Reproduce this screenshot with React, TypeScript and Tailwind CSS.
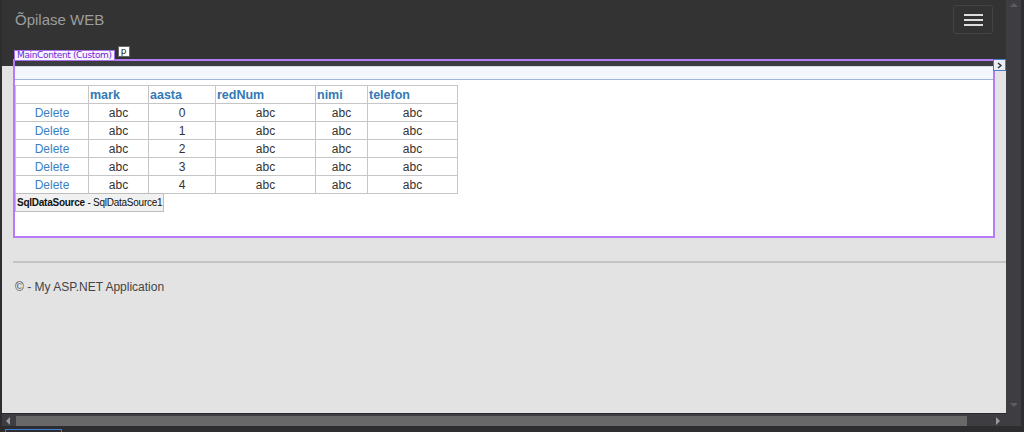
const rows = [0, 1, 2, 3, 4];
const cols = ["mark", "aasta", "redNum", "nimi", "telefon"];
const widths = ["w-[73px]", "w-[60px]", "w-[67px]", "w-[100px]", "w-[52px]", "w-[90px]"];

function GridView() {
  return (
    <table className="mt-[5px] w-[443px] table-fixed border-collapse border border-[#c6c6c6] font-['Liberation_Sans',Arial,sans-serif] text-[12px] leading-[14px] text-[#333]">
      <colgroup>
        {widths.map((w) => (
          <col key={w} className={w} />
        ))}
      </colgroup>
      <thead>
        <tr className="h-[18px]">
          <th className="border border-[#c6c6c6] p-0"></th>
          {cols.map((c) => (
            <th key={c} className="border border-[#c6c6c6] p-0 pl-[1px] text-left text-[12.5px] font-bold text-[#337ab7]">
              {c}
            </th>
          ))}
        </tr>
      </thead>
      <tbody>
        {rows.map((n) => (
          <tr key={n} className="h-[18px] text-center">
            <td className="border border-[#c6c6c6] p-0 text-[#3a80c4]">Delete</td>
            <td className="border border-[#c6c6c6] p-0">abc</td>
            <td className="border border-[#c6c6c6] p-0">{n}</td>
            <td className="border border-[#c6c6c6] p-0">abc</td>
            <td className="border border-[#c6c6c6] p-0">abc</td>
            <td className="border border-[#c6c6c6] p-0">abc</td>
          </tr>
        ))}
      </tbody>
    </table>
  );
}

export default function App() {
  return (
    <div className="flex h-[432px] w-[1024px] flex-col overflow-hidden bg-[#2d2d30]">
      <div className="flex h-[413px] pl-[2px]">
        {/* design surface */}
        <div className="flex w-[1004px] flex-col bg-[#e3e3e3]">
          <header className="flex h-[66px] flex-col bg-[#333333]">
            <div className="flex h-[46px] items-start justify-between px-[13px]">
              <span className="pt-[10px] font-['Liberation_Sans',Arial,sans-serif] text-[15px] leading-[20px] text-[#9d9d9d]">
                Õpilase WEB
              </span>
              <button className="mt-[5px] flex h-[29px] w-[40px] flex-col items-center justify-center gap-[3px] rounded-[3px] border border-[#444]">
                <span className="h-[2px] w-[19px] bg-[#dddddd]" />
                <span className="h-[2px] w-[19px] bg-[#dddddd]" />
                <span className="h-[2px] w-[19px] bg-[#dddddd]" />
              </button>
            </div>
            <div className="relative z-10 flex items-start pl-[12px]">
              <span className="mt-[4px] h-[11px] border border-[#a66ee8] bg-[#f8f4ff] px-[2px] font-['DejaVu_Sans',Verdana,sans-serif] text-[9px] leading-[9px] tracking-[-0.35px] text-[#6d28d9]">
                MainContent (Custom)
              </span>
              <span className="ml-[3px] flex h-[11px] w-[12px] items-center justify-center border border-[#666] bg-white font-['DejaVu_Sans',sans-serif] text-[9px] leading-none text-[#222]">
                p
              </span>
            </div>
          </header>

          <div className="relative mx-[11px] -mt-[7px] flex h-[179px] flex-col border-2 border-[#b57cf5] bg-white">
            <div className="h-[5px] bg-[#3b3c41]" />
            <div className="h-[14px] border-t border-b border-t-[#d3dae4] border-b-[#9fb5db] border-b-dotted bg-[#f3f7fd]" />
            <GridView />
            <div className="-mt-px w-[149px] whitespace-nowrap border border-[#bdbdbd] bg-[#f1f1f1] pl-[1px] font-['Liberation_Sans',Arial,sans-serif] text-[10px] leading-[17px] tracking-[-0.25px] text-[#111]">
              <b>SqlDataSource</b> - SqlDataSource1
            </div>
            <span className="absolute -right-[13px] -top-[2px] flex h-[12px] w-[13px] items-center justify-center border border-[#4a7cc7] bg-[#e9eef6]">
              <svg width="7" height="7" viewBox="0 0 7 7" fill="none">
                <path d="M2 1l3 2.5L2 6" stroke="#333" strokeWidth="1.4" />
              </svg>
            </span>
          </div>

          <div className="ml-[11px] mt-[23px] h-[2px] bg-[#c4c4c4]" />
          <p className="ml-[13px] mt-[16px] font-['Liberation_Sans',Arial,sans-serif] text-[12px] leading-[16px] text-[#444]">
            © - My ASP.NET Application
          </p>
        </div>

        {/* vertical scrollbar */}
        <div className="flex w-[15px] flex-col items-center justify-between bg-[#3e3e42] pb-[6px] pt-[3px]">
          <span className="h-0 w-0 border-x-[4px] border-b-[4px] border-x-transparent border-b-[#5c5c60]" />
          <span className="h-0 w-0 border-x-[4px] border-t-[4px] border-x-transparent border-t-[#5c5c60]" />
        </div>
      </div>

      {/* horizontal scrollbar */}
      <div className="flex h-[13px] pl-[2px]">
        <div className="flex w-[1004px] items-start border-t border-[#2a2a2c] bg-[#3e3e42]">
          <span className="ml-[4px] mt-[3px] h-0 w-0 border-y-[4px] border-r-[4px] border-y-transparent border-r-[#9a9a9a]" />
          <span className="ml-[6px] mt-[2px] h-[10px] w-[951px] bg-[#686868]" />
          <span className="ml-[29px] mt-[3px] h-0 w-0 border-y-[4px] border-l-[4px] border-y-transparent border-l-[#9a9a9a]" />
        </div>
        <div className="w-[15px] bg-[#3e3e42]" />
      </div>

      {/* status strip */}
      <div className="flex h-[6px] items-end">
        <span className="ml-[5px] h-[3px] w-[57px] border border-b-0 border-[#3b7ed6]" />
      </div>
    </div>
  );
}
